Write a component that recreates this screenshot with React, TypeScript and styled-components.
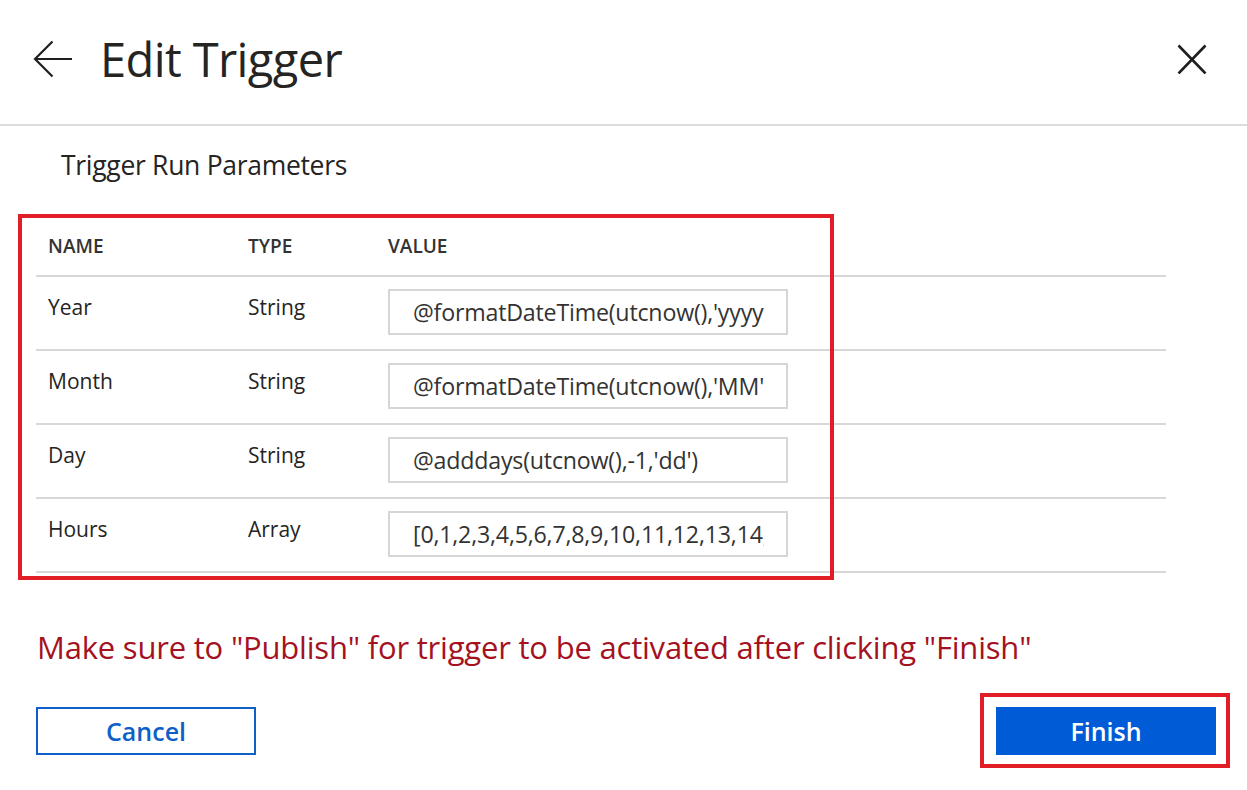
import React from "react";
import styled, { createGlobalStyle } from "styled-components";

const Global = createGlobalStyle`
  html, body { margin: 0; padding: 0; background: #ffffff; }
  body { font-family: "Open Sans", "Noto Sans", sans-serif; color: #252423; }
  * { box-sizing: border-box; }
`;

const Page = styled.div`
  width: 1247px;
  height: 790px;
  background: #fff;
  overflow: hidden;
`;

const Header = styled.header`
  height: 126px;
  display: flex;
  align-items: center;
  padding: 0 40px 6px 33px;
  border-bottom: 2px solid #dcdcdc;
`;

const IconButton = styled.button`
  border: 0;
  background: transparent;
  padding: 0;
  display: flex;
  align-items: center;
  justify-content: center;
  color: #1f1f1f;
  cursor: pointer;
`;

const Title = styled.h1`
  margin: 0 0 0 27px;
  font-size: 47px;
  font-weight: 400;
  letter-spacing: -0.6px;
  color: #252423;
  flex: 1;
`;

const Body = styled.main`
  padding: 20px 0 0 36px;
`;

const SectionTitle = styled.h2`
  margin: 0 0 0 25px;
  font-size: 26.5px;
  font-weight: 400;
  letter-spacing: -0.3px;
  color: #252423;
  line-height: 38px;
`;

const TableArea = styled.div`
  position: relative;
  width: 1130px;
  margin-top: 32px;
`;

const Highlight = styled.div<{ $t: number; $l: number; $w: number; $h: number }>`
  position: absolute;
  top: ${(p) => p.$t}px;
  left: ${(p) => p.$l}px;
  width: ${(p) => p.$w}px;
  height: ${(p) => p.$h}px;
  border: 4px solid #e11d26;
  pointer-events: none;
`;

const Row = styled.div<{ $head?: boolean }>`
  display: grid;
  grid-template-columns: 200px 140px 1fr;
  align-items: ${(p) => (p.$head ? "center" : "start")};
  height: ${(p) => (p.$head ? 61 : 74)}px;
  border-bottom: 2px solid #d8d8d8;
`;

const HeadCell = styled.div`
  padding-left: 12px;
  font-size: 19px;
  font-weight: 600;
  color: #333333;
`;

const Cell = styled.div`
  padding: 15px 0 0 12px;
  font-size: 21px;
  line-height: 30px;
  color: #252423;
`;

const ValueCell = styled.div`
  padding: 12px 0 0 12px;
`;

const ValueInput = styled.input`
  display: block;
  width: 400px;
  height: 46px;
  margin: 0;
  border: 2px solid #d6d6d6;
  border-radius: 0;
  padding: 0 22px 0 23px;
  font-family: "Open Sans", "Noto Sans", sans-serif;
  font-size: 23.2px;
  color: #333333;
  background: #fff;
  outline: none;
  letter-spacing: -0.2px;
`;

const Warning = styled.p`
  margin: 53px 0 0 1px;
  font-size: 31px;
  line-height: 42px;
  color: #a4121f;
  letter-spacing: -0.2px;
`;

const Actions = styled.div`
  display: flex;
  justify-content: space-between;
  width: 1180px;
  margin-top: 39px;
`;

const Button = styled.button<{ $primary?: boolean }>`
  width: 220px;
  height: 48px;
  font-family: "Open Sans", "Noto Sans", sans-serif;
  font-size: 25px;
  font-weight: 600;
  border: 2px solid;
  background: ${(p) => (p.$primary ? "#005cd6" : "#ffffff")};
  color: ${(p) => (p.$primary ? "#ffffff" : "#0f5fc9")};
  border-color: ${(p) => (p.$primary ? "#005cd6" : "#0f5fc9")};
  padding: 0;
  cursor: pointer;
`;

const FinishWrap = styled.div`
  position: relative;
`;

const rows = [
  { name: "Year", type: "String", value: "@formatDateTime(utcnow(),'yyyy')" },
  { name: "Month", type: "String", value: "@formatDateTime(utcnow(),'MM')" },
  { name: "Day", type: "String", value: "@adddays(utcnow(),-1,'dd')" },
  { name: "Hours", type: "Array", value: "[0,1,2,3,4,5,6,7,8,9,10,11,12,13,14,15,16,17,18,19,20,21,22,23]" },
];

export default function App() {
  return (
    <Page>
      <Global />
      <Header>
        <IconButton aria-label="Back">
          <svg width="40" height="38" viewBox="0 0 40 38" fill="none" stroke="#1f1f1f" strokeWidth="2.2">
            <path d="M39 19H2" />
            <path d="M19.5 1.5L2 19l17.5 17.5" />
          </svg>
        </IconButton>
        <Title>Edit Trigger</Title>
        <IconButton aria-label="Close">
          <svg width="30" height="30" viewBox="0 0 30 30" fill="none" stroke="#1f1f1f" strokeWidth="2.6">
            <path d="M1.5 1.5l27 28M28.5 1.5l-27 28" />
          </svg>
        </IconButton>
      </Header>
      <Body>
        <SectionTitle>Trigger Run Parameters</SectionTitle>
        <TableArea>
          <Row $head>
            <HeadCell>NAME</HeadCell>
            <HeadCell>TYPE</HeadCell>
            <HeadCell>VALUE</HeadCell>
          </Row>
          {rows.map((r) => (
            <Row key={r.name}>
              <Cell>{r.name}</Cell>
              <Cell>{r.type}</Cell>
              <ValueCell>
                <ValueInput readOnly value={r.value} />
              </ValueCell>
            </Row>
          ))}
          <Highlight $t={-2} $l={-18} $w={816} $h={366} />
        </TableArea>
        <Warning>Make sure to "Publish" for trigger to be activated after clicking "Finish"</Warning>
        <Actions>
          <Button>Cancel</Button>
          <FinishWrap>
            <Button $primary>Finish</Button>
            <Highlight $t={-14} $l={-16} $w={250} $h={75} />
          </FinishWrap>
        </Actions>
      </Body>
    </Page>
  );
}
